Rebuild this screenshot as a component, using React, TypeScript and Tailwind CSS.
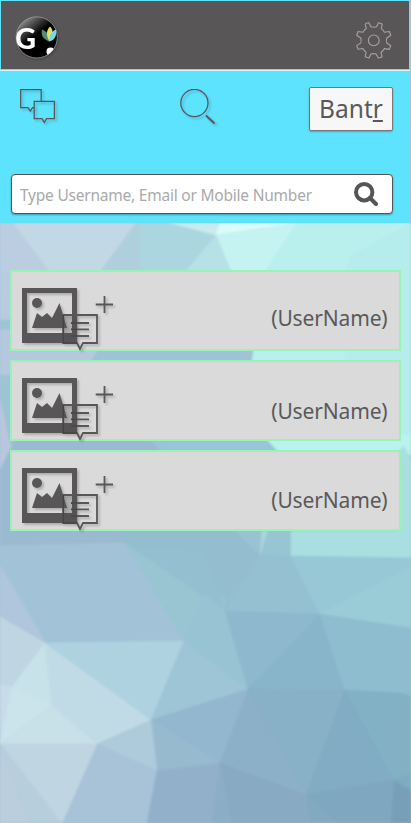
const facets: [string, string][] = [
  ["0,223 13,223 50,272 0,300", "#bbcde1"],
  ["13,223 136,223 100,272 50,272", "#c3d8e5"],
  ["136,223 140,223 140,300 90,300 100,272", "#b0cfdc"],
  ["140,223 170,223 216,235 185,272 140,272", "#abd6e0"],
  ["170,223 220,223 216,235", "#c8ebee"],
  ["220,223 297,223 216,235", "#dafbfa"],
  ["216,235 297,223 265,272 231,272", "#c5f3f2"],
  ["216,235 231,272 185,272", "#b5e1e7"],
  ["297,223 411,223 411,445 240,445 265,272", "#b9f0ee"],
  ["345,272 351,256 411,223 411,445 345,445", "#b4edeb"],
  ["0,272 50,272 40,290 0,350", "#b8cbe1"],
  ["0,320 240,320 240,445 0,490", "#9fc3d6"],
  ["0,330 110,330 85,370 0,375", "#b5c8df"],
  ["0,400 10,445 60,445 35,456 10,456 0,470", "#b8c7de"],
  ["165,435 264,435 278,455 165,455", "#99c5d6"],
  ["264,435 411,435 411,455 278,455", "#baf2ee"],
  ["0,470 15,440 150,440 260,555 225,611 125,543 0,546", "#9bbad1"],
  ["165,437 264,437 278,452 165,452", "#99c5d6"],
  ["125,543 120,531 235,531 260,555 225,611 205,600", "#94bdd0"],
  ["235,531 262,531 260,555", "#99c3d3"],
  ["262,531 269,531 260,556", "#a7d7dd"],
  ["268,531 291,531 291,556 260,556", "#98c5d2"],
  ["291,531 398,531 400,450 404,446 411,460 411,558 291,556", "#a9dfe1"],
  ["0,546 125,543 180,630 184,641 45,643 38,630 0,566", "#a2c3d7"],
  ["0,566 38,630 45,643 0,617", "#b0c6dc"],
  ["125,543 225,598 225,660 184,641", "#99c4d2"],
  ["125,543 205,551 225,611 206,598", "#94bfd0"],
  ["260,555 291,556 320,614 225,611", "#95c0d2"],
  ["291,556 411,558 411,567 320,614", "#96c8d6"],
  ["320,614 411,567 411,629", "#9accd8"],
  ["0,617 45,643 12,687 0,684", "#bfd6e2"],
  ["45,643 52,705 12,687", "#c8e2e9"],
  ["0,684 12,687 0,744", "#c7dce8"],
  ["12,687 52,705 0,744", "#cbe4eb"],
  ["52,705 97,744 0,744", "#c8e0e8"],
  ["45,643 151,720 97,744 52,705", "#c1dbe6"],
  ["45,643 184,641 151,720", "#afd2e1"],
  ["184,641 248,689 151,720", "#9ec5d5"],
  ["184,641 205,594 225,611 248,689", "#98c3d2"],
  ["225,611 320,614 248,689", "#8eb8cd"],
  ["320,614 345,690 248,689", "#88b5c9"],
  ["320,614 411,628 411,696 345,690", "#8dbdcf"],
  ["151,720 248,689 220,763", "#93b7ce"],
  ["151,720 220,763 157,771", "#97bace"],
  ["97,744 151,720 157,771", "#adcbda"],
  ["97,744 157,771 147,823 62,823", "#a8c3d7"],
  ["0,744 97,744 62,823", "#bfd5e1"],
  ["0,744 62,823 29,823", "#b7cedc"],
  ["0,744 29,823 0,823", "#bacede"],
  ["157,771 220,763 212,823 147,823", "#92b0ca"],
  ["220,763 212,823 232,823", "#8badc6"],
  ["248,689 306,795 220,763", "#8bb0c8"],
  ["248,689 345,690 306,795", "#88b0c6"],
  ["345,690 394,780 306,795", "#82abc4"],
  ["345,690 400,693 394,780", "#82b0c4"],
  ["400,693 411,696 411,774 394,780", "#83b1c3"],
  ["220,763 306,795 311,823 232,823", "#88aac3"],
  ["306,795 394,780 391,823 337,823", "#7fa7c0"],
  ["306,795 337,823 311,823", "#83a8c2"],
  ["394,780 411,790 411,823 391,823", "#789fb9"],
  ["394,780 411,774 411,790", "#7eabc0"],
];

function Backdrop() {
  return (
    <svg className="absolute inset-0 -z-10" width="411" height="823" viewBox="0 0 411 823">
      <defs>
        <filter id="soft" x="0" y="0" width="1" height="1"><feGaussianBlur stdDeviation="0.8" /></filter>
      </defs>
      <rect width="411" height="823" fill="#a2c3d7" />
      <g filter="url(#soft)">
        {facets.map(([points, color]) => (
          <polygon key={points} points={points} fill={color} stroke={color} strokeWidth="0.6" />
        ))}
      </g>
    </svg>
  );
}

function Logo() {
  return (
    <svg className="drop-shadow-[1px_1px_1px_#0004]" width="43" height="43" viewBox="0 0 43 43">
      <defs>
        <linearGradient id="ball" x1="0.1" y1="0" x2="0.7" y2="0.75">
          <stop stopColor="#b0b0b0" /><stop offset=".3" stopColor="#555" /><stop offset=".62" stopColor="#000" />
        </linearGradient>
        <clipPath id="disc"><circle cx="21.7" cy="21.4" r="20.5" /></clipPath>
      </defs>
      <circle cx="21.7" cy="21.4" r="20.6" fill="url(#ball)" stroke="#a0a0a0" strokeWidth=".8" />
      <g clipPath="url(#disc)">
        <text x="-.1" y="32.7" fontFamily="Lato, sans-serif" fontWeight="900" fontSize="29" fill="#fff">G</text>
        <circle cx="35.5" cy="35.6" r="4" fill="#fff" />
      </g>
      <g transform="translate(0 1.6)">
        <path d="M34 24C27 21 26 17 27 12C32 14 35 18 34 24Z" fill="#528c72" />
        <path d="M34.5 24C31 18 31 13 35 9C39 13 38 18 34.5 24Z" fill="#e5e063" />
        <path d="M34.5 24C34 18 36 14 41 12C42 18 40 22 34.5 24Z" fill="#73dbe5" />
      </g>
    </svg>
  );
}

function Gear() {
  return (
    <svg width="36" height="37" viewBox="0 0 36 37" fill="none" stroke="#aaa0a2" strokeWidth="1.1" strokeLinejoin="round">
      <path d="M10.2 1.2L13 .8L14.8 4.8Q17.7 5.7 20.6 4.8L22.5 .8L26.2 2.1L25.3 6.6Q27.5 8.1 28.4 10.2L33.4 9.5L34.8 13.2L30.8 16Q29.8 18.5 30.8 21L34.8 23.7L33.2 27.4L28.4 26.6Q27.2 29.2 25 30.4L26.1 34.9L22.3 36.1L20.1 32.1Q17.5 31.2 15 32.1L13 36.1L9.2 34.8L10.1 30.1Q7.8 28.7 6.9 26.5L2.1 27.3L.7 23.6L4.8 20.9Q5.6 18.5 4.8 16L.7 13.2L2.1 9.5L7 10.2Q8.2 7.9 10.3 6.5L9.2 2.3Z" />
      <circle cx="17.8" cy="18.4" r="5.4" />
    </svg>
  );
}

function ChatIcon() {
  return (
    <svg className="drop-shadow-[2px_2px_1px_#0003]" width="37" height="37" viewBox="0 0 37 37" fill="none" stroke="#595657" strokeWidth="1.3">
      <path d="M14 18.6H12.5L10.3 22L8 18.6H.7V.7H21.2V12" />
      <path d="M14.2 12.3H34.4V29.7H26.5L24.3 33.5L22 29.7H14.2Z" />
    </svg>
  );
}

function ThinSearch() {
  return (
    <svg className="drop-shadow-[2px_2px_1px_#0003]" width="37" height="37" viewBox="0 0 37 37" fill="none" stroke="#595657">
      <circle cx="14.4" cy="14" r="13.6" strokeWidth="1.3" />
      <path d="M26 26.5L34.5 34.5" strokeWidth="2" />
    </svg>
  );
}

function PhotoIcon() {
  return (
    <svg className="drop-shadow-[2px_2px_1px_#0003]" width="92" height="65" viewBox="0 0 92 65">
      <path fillRule="evenodd" d="M0 0H55V55H0ZM5 5V45H50V5Z" fill="#595657" />
      <circle cx="15" cy="15" r="5" fill="#595657" />
      <path d="M10 40L15 25L20 29L25 25L30 30L37.5 15L45 40Z" fill="#595657" />
      <path d="M40.5 26H56V55H40.5Z" fill="#4d4b4c" opacity=".25" />
      <g fill="none" stroke="#595657" strokeWidth="1.8">
        <path d="M41.3 27H75V55H61L58 61L55 55H41.3Z" />
        <path d="M49 35H67M49 41.3H67M49 48H67" />
        <path d="M82.5 8V25M73.7 16.5H91" />
      </g>
      <path d="M41.3 27V55H55M49 35H55M49 41.3H55M49 48H55" fill="none" stroke="#464445" strokeWidth="1.3" />
    </svg>
  );
}

function UserRow({ labelOffset }: { labelOffset: string }) {
  return (
    <div className="flex h-[81px] justify-between border-2 border-[#94f5b7] bg-[#dadada] pr-[11px] pl-[10.5px]">
      <div className="pt-4"><PhotoIcon /></div>
      <span className={`${labelOffset} font-['Noto_Sans',sans-serif] text-[21px] leading-[30px] tracking-[-0.15px] text-[#595959]`}>(UserName)</span>
    </div>
  );
}

export default function App() {
  return (
    <div className="relative isolate h-[823px] w-[411px] overflow-hidden">
      <Backdrop />
      <header className="flex h-[70px] w-[410px] items-start justify-between border border-[#5ee3ff] bg-[#595657] pt-[15px] pr-[17px] pl-[14px]">
        <Logo />
        <div className="pt-[6px]"><Gear /></div>
      </header>
      <section className="h-[153px] w-[410px] border-t border-[#d5f6f8] bg-[#5ee3ff]">
        <div className="flex h-[103px] items-start justify-between pt-4 pr-[17px] pl-5">
          <div className="pt-[2px]"><ChatIcon /></div>
          <div className="pt-[2px] pl-[30px]"><ThinSearch /></div>
          <button className="flex h-[44px] w-[84px] items-center justify-center rounded-[2px] border border-[#777] bg-[#f7f7f7] font-['Noto_Sans',sans-serif] text-[24.5px] leading-none text-[#595959] shadow-[0_1px_2px_#0004]">
            <span>Bant<span className="underline decoration-2 underline-offset-[2px]">r</span></span>
          </button>
        </div>
        <div className="mr-[17px] ml-[11px] flex h-10 items-center justify-between rounded-[4px] border border-[#555] bg-white pr-[14px] pl-[8px] shadow-[0_1px_2px_#0005]">
          <span className="pt-px font-['Noto_Sans',sans-serif] text-[15.5px] leading-5 tracking-[-0.22px] whitespace-nowrap text-[#aaa]">Type Username, Email or Mobile Number</span>
          <svg width="24" height="24" viewBox="0 0 24 24" fill="none" stroke="#555" strokeWidth="4">
            <circle cx="10.2" cy="10.2" r="8.2" /><path d="M16 16L22 22" strokeLinecap="round" />
          </svg>
        </div>
      </section>
      <main className="flex flex-col gap-[9px] pt-[47px] pr-[10.5px] pl-[9.5px]">
        <UserRow labelOffset="pt-[31px]" />
        <UserRow labelOffset="pt-[34px]" />
        <UserRow labelOffset="pt-[33px]" />
      </main>
    </div>
  );
}
